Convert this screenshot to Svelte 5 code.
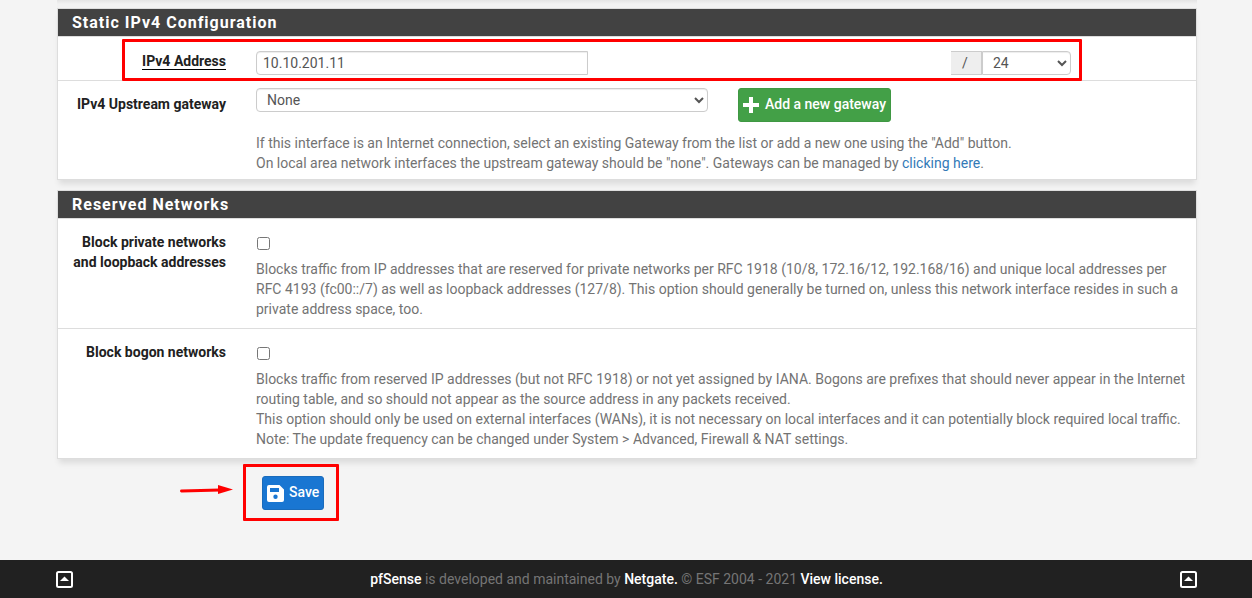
<script>
  let address = $state('10.10.201.11');
  let prefix = $state('24');
  let gateway = $state('None');
  let blockPrivate = $state(false);
  let blockBogons = $state(false);
</script>

{#snippet toTop()}
  <a class="to-top" href="#app" aria-label="Back to top">
    <svg width="17" height="17" viewBox="0 0 17 17">
      <rect x="1" y="1" width="15" height="15" rx="1.5" fill="none" stroke="#fff" stroke-width="2" />
      <path d="M4 10h9L8.500 5.500z" fill="#fff" />
    </svg>
  </a>
{/snippet}

<div class="page">
  <main>
    <div class="previous"></div>
    <form onsubmit={(e) => e.preventDefault()}>
      <section class="panel">
        <h2>Static IPv4 Configuration</h2>
        <div class="row address-row">
          <label for="address"><span class="required">IPv4 Address</span></label>
          <div class="address-fields">
            <input id="address" class="control" type="text" bind:value={address} />
            <div class="mask">
              <span class="addon">/</span>
              <select class="control" aria-label="Subnet prefix" bind:value={prefix}>
                <option>24</option>
                <option>32</option>
              </select>
            </div>
          </div>
          <div class="mark mark-address"></div>
        </div>
        <div class="row gateway-row">
          <label for="gateway">IPv4 Upstream gateway</label>
          <div>
            <div class="gateway-fields">
              <select id="gateway" class="control" bind:value={gateway}>
                <option>None</option>
              </select>
              <button class="btn add" type="button">
                <svg width="16" height="16" viewBox="0 0 16 16"><path d="M6 0h4v6h6v4h-6v6H6v-6H0V6h6z" fill="#fff" /></svg>
                <span>Add a new gateway</span>
              </button>
            </div>
            <p class="help">
              If this interface is an Internet connection, select an existing Gateway from the list or add a new one using the "Add" button.<br />
              On local area network interfaces the upstream gateway should be "none". Gateways can be managed by <a href="#gateways">clicking here</a>.
            </p>
          </div>
        </div>
      </section>

      <section class="panel">
        <h2>Reserved Networks</h2>
        <div class="row check-row">
          <label for="private">Block private networks and loopback addresses</label>
          <div>
            <input id="private" type="checkbox" bind:checked={blockPrivate} />
            <p class="help">
              Blocks traffic from IP addresses that are reserved for private networks per RFC 1918 (10/8, 172.16/12, 192.168/16) and unique local addresses per RFC 4193 (fc00::/7) as well as loopback addresses (127/8). This option should generally be turned on, unless this network interface resides in such a private address space, too.
            </p>
          </div>
        </div>
        <div class="row check-row">
          <label for="bogons">Block bogon networks</label>
          <div>
            <input id="bogons" type="checkbox" bind:checked={blockBogons} />
            <p class="help">
              Blocks traffic from reserved IP addresses (but not RFC 1918) or not yet assigned by IANA. Bogons are prefixes that should never appear in the Internet routing table, and so should not appear as the source address in any packets received.<br />
              This option should only be used on external interfaces (WANs), it is not necessary on local interfaces and it can potentially block required local traffic.<br />
              Note: The update frequency can be changed under System &gt; Advanced, Firewall &amp; NAT settings.
            </p>
          </div>
        </div>
      </section>

      <div class="actions">
        <div class="save-wrap">
          <button class="btn save" type="submit">
            <svg width="17" height="17" viewBox="0 0 17 17">
              <path fill="#fff" fill-rule="evenodd" d="M2 0h10.500L17 4.500V15a2 2 0 0 1-2 2H2a2 2 0 0 1-2-2V2a2 2 0 0 1 2-2zM3 3v4h9V3zM8.500 9.500a2.200 2.200 0 1 0 0 4.400a2.200 2.200 0 0 0 0-4.400z" />
            </svg>
            <span>Save</span>
          </button>
          <div class="mark mark-save"></div>
          <svg class="arrow" width="53" height="12" viewBox="0 0 53 12">
            <path d="M1.500 7L40 6" stroke="#f00" stroke-width="3" stroke-linecap="round" />
            <path d="M38 1L53 5.500L38 10z" fill="#f00" />
          </svg>
        </div>
      </div>
    </form>
  </main>

  <footer>
    {@render toTop()}
    <p>
      <a href="#pfsense">pfSense</a> is developed and maintained by <a href="#netgate">Netgate.</a> © ESF 2004 - 2021 <a href="#license">View license.</a>
    </p>
    {@render toTop()}
  </footer>
</div>

<style>
  :global(body) {
    margin: 0;
    background: #f4f4f4;
  }
  .page {
    display: flex;
    flex-direction: column;
    min-height: 100vh;
    font: 14px/20px Roboto, "Liberation Sans", sans-serif;
    color: #212121;
  }
  .page :global(*) {
    box-sizing: border-box;
  }
  main {
    flex: 1;
    padding: 0 55px 39px 57px;
  }
  .previous {
    height: 8px;
    background: linear-gradient(#e4e4e4, #f2f2f2 4px);
  }
  .panel {
    margin-bottom: 10px;
    background: #fff;
    border: 1px solid #ddd;
    box-shadow: 0 6px 6px -2px rgba(0, 0, 0, 0.1);
  }
  h2 {
    margin: 0;
    padding: 4px 14px 3px;
    border-bottom: 1px solid #ddd;
    background: #424242;
    background-clip: padding-box;
    color: #fff;
    font-size: 16px;
    line-height: 20px;
    font-weight: 700;
    letter-spacing: 1px;
  }
  .row {
    position: relative;
    display: grid;
    grid-template-columns: 168px 1fr;
    column-gap: 30px;
  }
  .row + .row {
    border-top: 1px solid #ddd;
  }
  label {
    padding-left: 8px;
    text-align: right;
    font-weight: 700;
  }
  .required {
    border-bottom: 1px solid #000;
    line-height: 16px;
    display: inline-block;
  }
  .control {
    height: 24px;
    border: 1px solid #ccc;
    border-radius: 4px;
    background-color: #fff;
    box-shadow: inset 0 1px 1px rgba(0, 0, 0, 0.075);
    color: #555;
    font: inherit;
    padding: 0 6px;
  }
  .address-row {
    padding: 14px 0 5px;
  }
  .address-fields {
    display: flex;
    justify-content: space-between;
    padding-right: 125px;
  }
  .address-fields > .control {
    width: 332px;
    border-radius: 4px 0 0 4px;
  }
  .mask {
    display: flex;
  }
  .addon {
    width: 31px;
    border: 1px solid #ccc;
    border-left: 0;
    background: #eee;
    color: #555;
    line-height: 22px;
    text-align: center;
    padding-right: 2px;
  }
  .mask .control {
    width: 89px;
    border-radius: 0 4px 4px 0;
  }
  .gateway-row {
    padding: 7px 0 6px;
  }
  .gateway-row > label {
    padding-top: 6px;
  }
  .gateway-fields {
    display: flex;
    align-items: flex-start;
    gap: 30px;
  }
  .gateway-fields .control {
    width: 452px;
  }
  .btn {
    display: inline-flex;
    align-items: center;
    gap: 6px;
    height: 34px;
    padding: 0 4px;
    border: 1px solid transparent;
    border-radius: 3px;
    color: #fff;
    font: inherit;
    font-weight: 500;
  }
  .btn span {
    padding-bottom: 2px;
  }
  .add {
    background: #43a047;
    border-color: #3f9843;
  }
  .save {
    background: #1976d2;
    border-color: #1a6bbb;
    gap: 5px;
  }
  .help {
    margin: 0;
    color: #737373;
  }
  .gateway-row .help {
    margin-top: 11px;
  }
  .help a {
    color: #337ab7;
    text-decoration: none;
  }
  .check-row {
    padding: 13px 8px 9px 0;
  }
  .check-row input {
    display: block;
    width: 13px;
    height: 13px;
    margin: 5px 0 9px 1px;
  }
  .actions {
    padding: 7px 0 0 205px;
  }
  .save-wrap {
    position: relative;
    display: inline-flex;
  }
  .mark {
    position: absolute;
    z-index: 1;
    border: 3px solid #f00;
    border-radius: 1px;
    pointer-events: none;
  }
  .mark-address {
    inset: 2px 114px -1px 64px;
  }
  .mark-save {
    inset: -12px -15px -11px -19px;
  }
  .arrow {
    position: absolute;
    top: 8px;
    left: -82px;
  }
  footer {
    display: flex;
    align-items: center;
    justify-content: space-between;
    height: 38px;
    padding: 0 55px 0 56px;
    background: #212121;
    color: #757575;
  }
  footer p {
    margin: 0;
  }
  footer a {
    color: #fff;
    font-weight: 500;
    text-decoration: none;
  }
  .to-top {
    display: flex;
  }
</style>
